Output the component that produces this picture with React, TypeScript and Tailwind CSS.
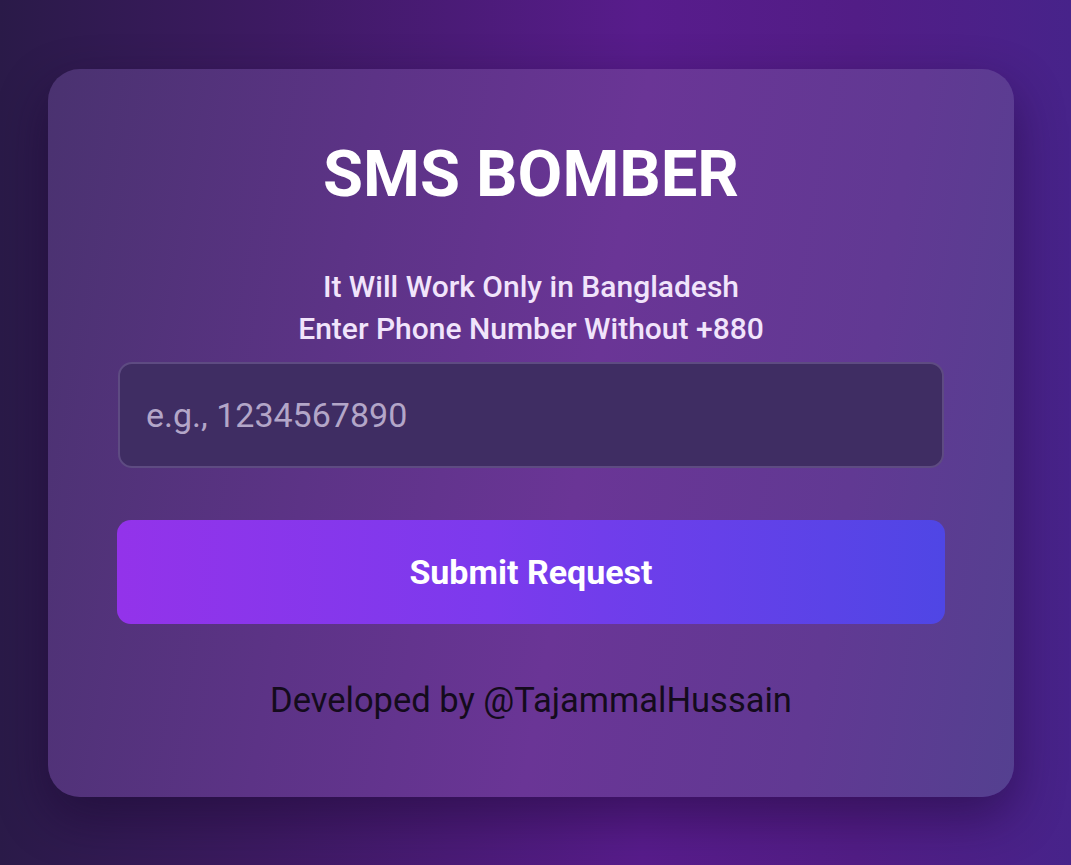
import React from 'react';

const App = () => {
    return (
        <div
            className="min-h-screen w-full bg-[linear-gradient(90deg,#2a1a48_0%,#3d1a62_25%,#581c8c_60%,#521d86_80%,#47238a_100%)] pt-[69px] pl-[48px] pr-[57px] pb-[68px]"
            style={{ fontFamily: 'Roboto, "Liberation Sans", sans-serif' }}
        >
            <div className="flex h-[728px] w-[966px] flex-col items-center rounded-[32px] bg-[linear-gradient(100deg,#4a3270_0%,#5c3386_30%,#6a3596_55%,#613993_80%,#544090_100%)] px-[70px] pt-[66px] shadow-[0_20px_50px_rgba(20,5,40,0.45)]">
                <h1 className="text-[65px] font-bold leading-[1.2] text-white">SMS BOMBER</h1>
                <div className="mt-[53px] text-center text-[30px] font-medium leading-[42px] text-[#f1e4fb]">
                    <p>It Will Work Only in Bangladesh</p>
                    <p>Enter Phone Number Without +880</p>
                </div>
                <input
                    type="text"
                    placeholder="e.g., 1234567890"
                    className="mt-[12px] h-[106px] w-[826px] rounded-[14px] border-2 border-[#5e4b82] bg-[#3f2d63] px-[26px] text-[34px] text-white outline-none placeholder:text-[#b3a6c8]"
                />
                <button className="mt-[52px] h-[104px] w-[828px] rounded-[14px] bg-[linear-gradient(90deg,#9333ea_0%,#7c3aed_45%,#4f46e5_100%)] text-[34px] font-bold text-white">
                    Submit Request
                </button>
                <p className="mt-[56px] text-[34.5px] leading-[1.2] text-[#140b1c]">Developed by @TajammalHussain</p>
            </div>
        </div>
    );
};

export default App;
